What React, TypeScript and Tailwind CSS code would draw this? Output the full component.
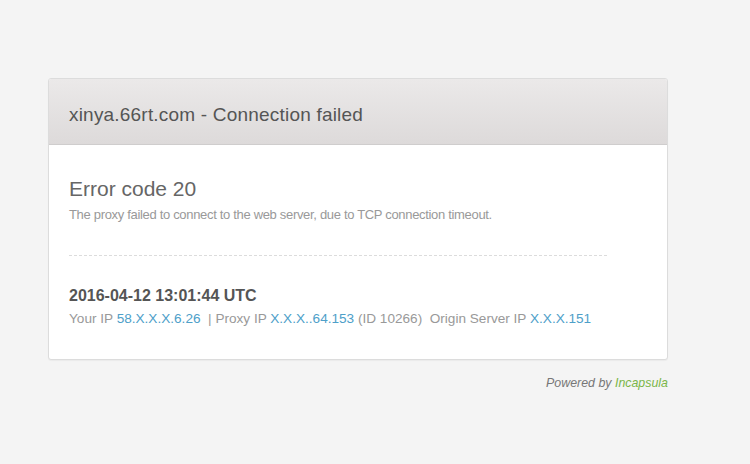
import React from "react";

export default function App() {
  const arial = { fontFamily: '"Liberation Sans", Arial, sans-serif' };
  return (
    <div className="w-[750px] h-[464px] bg-[#f4f4f4] overflow-hidden" style={arial}>
      <div className="pt-[78px] pl-[48px]">
        <div className="w-[620px] rounded-[3px] border border-[#dcdcdc] bg-white shadow-[0_1px_1px_rgba(0,0,0,0.04)] overflow-hidden">
          <div className="h-[66px] flex items-center pl-[20px] bg-gradient-to-b from-[#ebe9e9] to-[#dddada] border-b border-[#cfcdcd]">
            <h1 className="text-[19px] tracking-[0.2px] leading-none text-[#555] pt-[6px]">xinya.66rt.com - Connection failed</h1>
          </div>
          <div className="pl-[20px] pr-[60px] pt-[32px] pb-[32px]">
            <div className="text-[21px] leading-[24px] text-[#666]">Error code 20</div>
            <div className="text-[13px] tracking-[-0.32px] leading-[16px] text-[#999] mt-[6px]">
              The proxy failed to connect to the web server, due to TCP connection timeout.
            </div>
            <div className="mt-[32px] border-t border-dashed border-[#dcdcdc]" />
            <div className="mt-[31px] text-[16px] leading-[18px] font-bold text-[#555]">2016-04-12 13:01:44 UTC</div>
            <div className="text-[13.6px] leading-[16px] text-[#999] mt-[6px]">
              Your IP <span className="text-[#4ea0c9]">58.X.X.X.6.26</span>&nbsp; | Proxy IP{" "}
              <span className="text-[#4ea0c9]">X.X.X..64.153</span> (ID 10266)&nbsp; Origin Server IP{" "}
              <span className="text-[#4ea0c9]">X.X.X.151</span>
            </div>
          </div>
        </div>
        <div className="w-[620px] text-right mt-[14px] text-[12.4px] italic text-[#777]">
          Powered by <span className="text-[#7ab648]">Incapsula</span>
        </div>
      </div>
    </div>
  );
}
